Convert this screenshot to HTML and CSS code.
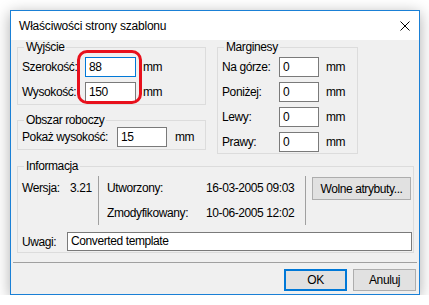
FILE: index.html
```html
<!DOCTYPE html>
<html lang="pl">
<head>
<meta charset="utf-8">
<title>Właściwości strony szablonu</title>
<link rel="stylesheet" href="styles.css">
</head>
<body>
<div class="window">
  <div class="titlebar">
    <span class="title">Właściwości strony szablonu</span>
    <svg class="close" width="10" height="10" viewBox="0 0 10 10"><path d="M0.5 0.5 L9.5 9.5 M9.5 0.5 L0.5 9.5" stroke="#000" stroke-width="1" fill="none"/></svg>
  </div>
  <div class="client">
    <div class="toprow">
      <div class="leftcol">
        <fieldset class="grp grp-out">
          <legend>Wyjście</legend>
          <div class="rows rows-out">
            <span class="lbl">Szerokość:</span><span class="inp focus">88</span><span class="unit">mm</span>
            <span class="lbl">Wysokość:</span><span class="inp">150</span><span class="unit">mm</span>
            <div class="highlight"></div>
          </div>
        </fieldset>
        <fieldset class="grp grp-work">
          <legend>Obszar roboczy</legend>
          <div class="rows rows-work">
            <span class="lbl">Pokaż wysokość:</span><span class="inp">15</span><span class="unit">mm</span>
          </div>
        </fieldset>
      </div>
      <fieldset class="grp grp-margin">
        <legend>Marginesy</legend>
        <div class="rows rows-margin">
          <span class="lbl">Na górze:</span><span class="inp">0</span><span class="unit">mm</span>
          <span class="lbl">Poniżej:</span><span class="inp">0</span><span class="unit">mm</span>
          <span class="lbl">Lewy:</span><span class="inp">0</span><span class="unit">mm</span>
          <span class="lbl">Prawy:</span><span class="inp">0</span><span class="unit">mm</span>
        </div>
      </fieldset>
    </div>
    <fieldset class="grp grp-info">
      <legend>Informacja</legend>
      <div class="info-top">
        <div class="ver"><span class="ver-lbl">Wersja:</span><span>3.21</span></div>
        <div class="vsep"></div>
        <div class="dates">
          <span class="date-lbl">Utworzony:</span><span>16-03-2005 09:03</span>
          <span class="date-lbl">Zmodyfikowany:</span><span>10-06-2005 12:02</span>
        </div>
        <div class="vsep"></div>
        <div class="attr"><span class="btn btn-attr">Wolne atrybuty...</span></div>
      </div>
      <div class="notes">
        <span class="notes-lbl">Uwagi:</span><span class="inp inp-notes">Converted template</span>
      </div>
    </fieldset>
    <div class="hsep"></div>
    <div class="buttons">
      <span class="btn btn-ok">OK</span>
      <span class="btn">Anuluj</span>
    </div>
  </div>
</div>
</body>
</html>
```
FILE: styles.css
```css
* { box-sizing: border-box; }
body {
  margin: 0;
  background: #ffffff;
  font-family: "Liberation Sans", Arial, sans-serif;
  font-size: 12px;
  color: #000;
}
.window {
  margin: 10px 0 0 10px;
  width: 410px;
  height: 285px;
  border: 1px solid #1a80d6;
  background: #f0f0f0;
  box-shadow: 0 3px 14px rgba(0, 0, 0, 0.32);
  display: flex;
  flex-direction: column;
}
.titlebar {
  height: 29px;
  background: #ffffff;
  display: flex;
  align-items: center;
  justify-content: space-between;
  padding: 1px 9px 0 8px;
  letter-spacing: -0.2px;
}
.close { display: block; }
.client {
  flex: 1;
  display: flex;
  flex-direction: column;
  letter-spacing: -0.4px;
}
.toprow {
  display: flex;
  align-items: flex-start;
  margin: 0 0 0 6px;
  gap: 11px;
}
.leftcol {
  width: 189px;
  display: flex;
  flex-direction: column;
  gap: 8px;
}
.grp {
  margin: 0;
  min-width: 0;
  border: 1px solid #dcdcdc;
  padding: 3px 4px 2px 4px;
}
.grp legend {
  padding: 0 2px;
  margin-left: 2px;
  line-height: 14px;
}
.rows {
  display: grid;
  align-items: center;
  row-gap: 5px;
  grid-auto-rows: 20px;
}
.rows-out {
  position: relative;
  grid-template-columns: 63px 51px auto;
}
.grp-work { padding-top: 0; }
.rows-work { grid-template-columns: 95px 50px auto; }
.grp-margin { width: 141px; padding-bottom: 1px; }
.rows-margin { grid-template-columns: 57px 40px auto; }
.unit { padding-left: 7px; }
.rows-work .unit { padding-left: 8px; }
.rows-margin .unit { padding-left: 7px; }
.inp {
  display: block;
  height: 20px;
  background: #ffffff;
  border: 1px solid #7a7a7a;
  padding: 0 3px;
  line-height: 18px;
  white-space: nowrap;
  overflow: hidden;
}
.inp.focus { border-color: #0078d7; }
.highlight {
  position: absolute;
  left: 55px;
  top: -7px;
  width: 65px;
  height: 54px;
  border: 3.5px solid #e8101c;
  border-radius: 10px;
}
.grp-info {
  margin: 5px 5px 0 6px;
  padding: 3px 1px 1px 4px;
}
.info-top {
  display: flex;
  height: 49px;
}
.ver {
  width: 76px;
  height: 24px;
  display: flex;
  align-items: center;
}
.ver-lbl { width: 48px; }
.vsep {
  width: 1px;
  background: #a0a0a0;
}
.dates {
  width: 206px;
  padding-left: 8px;
  display: grid;
  grid-template-columns: 99px auto;
  grid-template-rows: 24px 25px;
  align-items: center;
}
.attr {
  flex: 1;
  padding: 1px 1px 0 6px;
}
.btn {
  display: flex;
  align-items: center;
  justify-content: center;
  background: #e1e1e1;
  border: 1px solid #adadad;
  height: 22px;
  width: 63px;
}
.btn-attr { width: 99px; height: 23px; }
.notes {
  display: flex;
  align-items: center;
  margin-top: 7px;
}
.notes-lbl { width: 45px; }
.inp-notes { width: 345px; height: 19px; line-height: 17px; }
.hsep {
  height: 1px;
  margin: 9px 2px 0 2px;
  background: #a0a0a0;
}
.buttons {
  display: flex;
  justify-content: flex-end;
  gap: 6px;
  margin: 6px 3px 0 0;
}
.btn-ok { border: 2px solid #0078d7; }
```
